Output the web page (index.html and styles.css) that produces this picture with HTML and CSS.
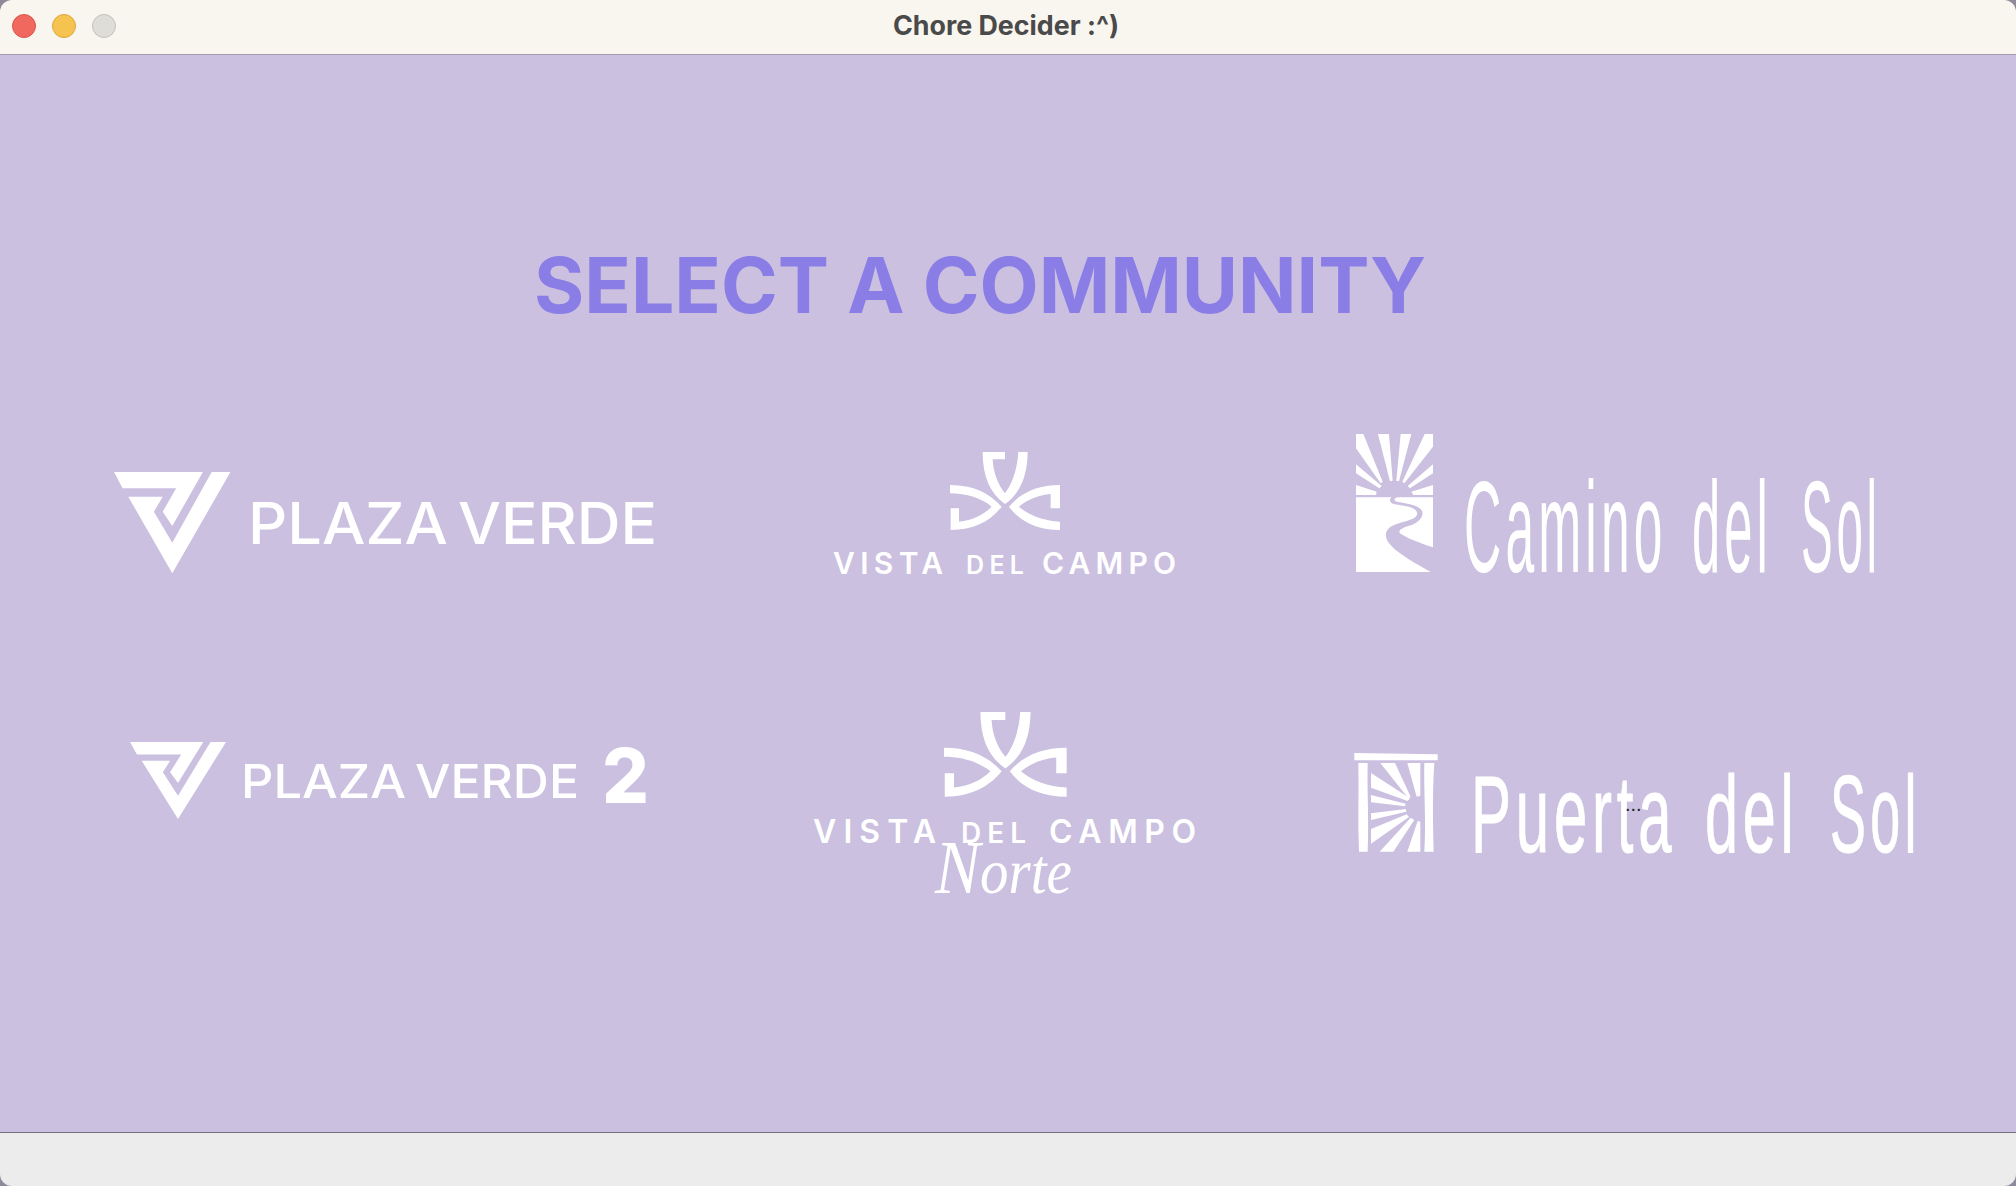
FILE: index.html
```html
<!DOCTYPE html>
<html lang="en">
<head>
<meta charset="utf-8">
<title>Chore Decider :^)</title>
<link rel="stylesheet" href="styles.css">
</head>
<body>
<div class="window">
  <header class="titlebar">
    <div class="lights">
      <span class="light light-close"></span>
      <span class="light light-min"></span>
      <span class="light light-max"></span>
    </div>
    <div class="title">Chore Decider :^)</div>
  </header>
  <main class="content">
    <h1 class="heading">SELECT A COMMUNITY</h1>
    <div class="logos">
      <svg class="logo logo-plaza" viewBox="100 430 580 170">
        <g transform="translate(90 440) scale(.3827 .3333)">
          <path d="M63 96H295L215 258L190 215L225 145H85Z"/>
          <path d="M100 170H190L167 215L215 308L318 96H367L215 400Z"/>
        </g>
        <text class="t-plaza" x="248" y="544" font-size="58" textLength="200" lengthAdjust="spacingAndGlyphs">PLAZA</text>
        <text class="t-plaza" x="458" y="544" font-size="58" textLength="199" lengthAdjust="spacingAndGlyphs">VERDE</text>
      </svg>
      <svg class="logo" viewBox="790 430 430 170">
        <g transform="translate(810 440) scale(.3333)">
          <path d="M518 36H585V58H548C550 100 565 135 585 160C605 135 622 90 625 36H653C652 110 630 160 585 192C540 160 518 110 518 36Z"/>
          <path d="M420 135V160C470 160 515 175 545 200C520 225 490 240 447 245V205H422V270C490 270 540 245 575 200C540 160 490 135 420 135Z"/>
          <path d="M750 135V205H722V162C685 165 650 180 627 200C655 225 700 243 750 245V270C680 270 630 245 597 200C630 160 680 135 750 135Z"/>
        </g>
        <text class="t-vista" x="833" y="574" font-size="30" textLength="110" lengthAdjust="spacing">VISTA</text>
        <text class="t-vista" x="966" y="574" font-size="25" textLength="58" lengthAdjust="spacing">DEL</text>
        <text class="t-vista" x="1042" y="574" font-size="30" textLength="134" lengthAdjust="spacing">CAMPO</text>
      </svg>
      <svg class="logo logo-wide" viewBox="1330 430 600 170">
        <g transform="translate(1340 420) scale(.3333)">
          <path d="M48 42H70L128 185L122 190L48 85Z"/>
          <path d="M114 42H147L158 182L150 184Z"/>
          <path d="M182 42H214L177 184L169 182Z"/>
          <path d="M254 42H279V80L193 190L187 185Z"/>
          <path d="M48 133L125 198L118 205L48 160Z"/>
          <path d="M279 133V160L210 205L203 198Z"/>
          <path d="M48 195L110 215L108 225H48Z"/>
          <path d="M279 195V225H220L214 215Z"/>
          <path d="M48 232H155C145 240 150 250 165 253C195 258 230 262 232 280C232 298 200 302 170 312C145 320 135 335 138 350C145 385 210 420 272 456H48Z"/>
          <path d="M172 232H279V382C240 370 195 352 180 340C172 330 190 322 215 315C240 305 250 290 247 275C240 255 200 250 170 245C160 242 162 236 172 232Z"/>
        </g>
        <text class="t-thin" transform="translate(1464 572) scale(.397 1)" font-size="130">Camino</text>
        <text class="t-thin" transform="translate(1692 572) scale(.39 1)" font-size="130">del</text>
        <text class="t-thin" transform="translate(1801 572) scale(.365 1)" font-size="130">Sol</text>
      </svg>
      <svg class="logo logo-plaza logo-tall" viewBox="100 700 580 200">
        <g transform="translate(130 742) scale(.3158 .2533) translate(-63 -96)">
          <path d="M63 96H295L215 258L190 215L225 145H85Z"/>
          <path d="M100 170H190L167 215L215 308L318 96H367L215 400Z"/>
        </g>
        <text class="t-plaza" x="241" y="798" font-size="47" textLength="165" lengthAdjust="spacingAndGlyphs">PLAZA</text>
        <text class="t-plaza" x="415" y="798" font-size="47" textLength="164" lengthAdjust="spacingAndGlyphs">VERDE</text>
        <text class="t-two" x="602" y="803" font-size="75" textLength="47" lengthAdjust="spacingAndGlyphs">2</text>
      </svg>
      <svg class="logo logo-tall" viewBox="790 700 430 200">
        <g transform="translate(944 712) scale(.3717 .3617) translate(-420 -36)">
          <path d="M518 36H585V58H548C550 100 565 135 585 160C605 135 622 90 625 36H653C652 110 630 160 585 192C540 160 518 110 518 36Z"/>
          <path d="M420 135V160C470 160 515 175 545 200C520 225 490 240 447 245V205H422V270C490 270 540 245 575 200C540 160 490 135 420 135Z"/>
          <path d="M750 135V205H722V162C685 165 650 180 627 200C655 225 700 243 750 245V270C680 270 630 245 597 200C630 160 680 135 750 135Z"/>
        </g>
        <text class="t-vista" x="813" y="843" font-size="32" textLength="123" lengthAdjust="spacing">VISTA</text>
        <text class="t-vista" x="961" y="843" font-size="28" textLength="65" lengthAdjust="spacing">DEL</text>
        <text class="t-vista" x="1049" y="843" font-size="32" textLength="147" lengthAdjust="spacing">CAMPO</text>
        <text class="t-norte" transform="translate(935 893) scale(.89 1)" font-size="64"><tspan class="t-norte-cap">N</tspan>orte</text>
      </svg>
      <svg class="logo logo-wide logo-tall" viewBox="1330 700 600 200">
        <g transform="translate(1345 745) scale(.3333)">
          <path d="M28 24L278 28V46H28Z"/>
          <path d="M40 54H68C66 140 72 220 68 320H42C38 230 42 140 40 54Z"/>
          <path d="M238 54H268C262 140 264 230 266 320H238C244 230 236 140 238 54Z"/>
          <path d="M106 54H150L197 155L190 160Z"/>
          <path d="M187 54H226V152L215 155Z"/>
          <path d="M78 84L195 160L188 168L78 128Z"/>
          <path d="M78 150L182 176L180 184L78 172Z"/>
          <path d="M78 205L182 192L184 200L78 225Z"/>
          <path d="M78 252L185 208L192 216L78 296Z"/>
          <path d="M104 320L197 218L208 225L145 320Z"/>
          <path d="M187 320L218 228L226 230V320Z"/>
        </g>
        <text class="t-thin t-thin-b" transform="translate(1471 852) scale(.545 1)" font-size="110">Puerta</text>
        <text class="t-thin t-thin-b" transform="translate(1705 852) scale(.54 1)" font-size="110">del</text>
        <text class="t-thin t-thin-b" transform="translate(1830 852) scale(.49 1)" font-size="110">Sol</text>
        <text class="t-dots" x="1625" y="811" font-size="20">...</text>
      </svg>
    </div>
  </main>
  <footer class="statusbar"></footer>
</div>
</body>
</html>
```
FILE: styles.css
```css
* { box-sizing: border-box; }
html, body { margin: 0; height: 100%; }
body { background: #8f8a99; overflow: hidden; }
.window {
  height: 100vh;
  display: flex;
  flex-direction: column;
  border-radius: 12px;
  overflow: hidden;
}
.titlebar {
  height: 55px;
  flex: none;
  background: #f9f6ef;
  border-bottom: 1px solid #a498b4;
  padding-bottom: 3px;
  display: flex;
  align-items: center;
  position: relative;
}
.lights { display: flex; gap: 16px; padding-left: 12px; }
.light {
  width: 24px;
  height: 24px;
  border-radius: 50%;
  border: 1px solid;
}
.light-close { background: #f0685e; border-color: #d9564d; }
.light-min { background: #f6c250; border-color: #dba740; }
.light-max { background: #dfddd8; border-color: #c4c1bb; }
.title {
  position: absolute;
  left: 0;
  right: 4px;
  padding-bottom: 2px;
  text-align: center;
  font: 700 26.8px "Inter", sans-serif;
  color: #4a4a4a;
}
.content {
  flex: 1;
  background: #cbc0e0;
  padding: 181px 0 0 100px;
}
.heading {
  margin: 0 0 94px 434px;
  font: 700 76.8px/100px "Inter", sans-serif;
  color: #8a7de6;
  white-space: nowrap;
}
.logos {
  display: grid;
  grid-template-columns: 580px 430px 600px;
  grid-template-rows: 170px 200px;
  gap: 100px 110px;
}
.logo { display: block; width: 580px; height: 170px; fill: #fff; }
.logo:nth-child(3n+2) { width: 430px; }
.logo-wide { width: 600px; }
.logo-tall { height: 200px; }
.logo-plaza { filter: blur(.6px); }
.t-plaza { font-family: "Inter", sans-serif; font-weight: 500; }
.t-two { font-family: "Inter", sans-serif; font-weight: 800; }
.t-vista { font-family: "Inter", sans-serif; font-weight: 600; }
.t-thin {
  font-family: "Liberation Sans", sans-serif;
  letter-spacing: .08em;
}
.t-thin-b {
  stroke: #fff;
  stroke-width: .8px;
  vector-effect: non-scaling-stroke;
}
.t-norte { font-family: "Liberation Serif", serif; font-style: italic; }
.t-norte-cap { font-size: 76px; }
.t-dots { font-family: "Liberation Sans", sans-serif; fill: #222; }
.statusbar {
  height: 54px;
  flex: none;
  background: #ececec;
  border-top: 1px solid #77747e;
}
```
